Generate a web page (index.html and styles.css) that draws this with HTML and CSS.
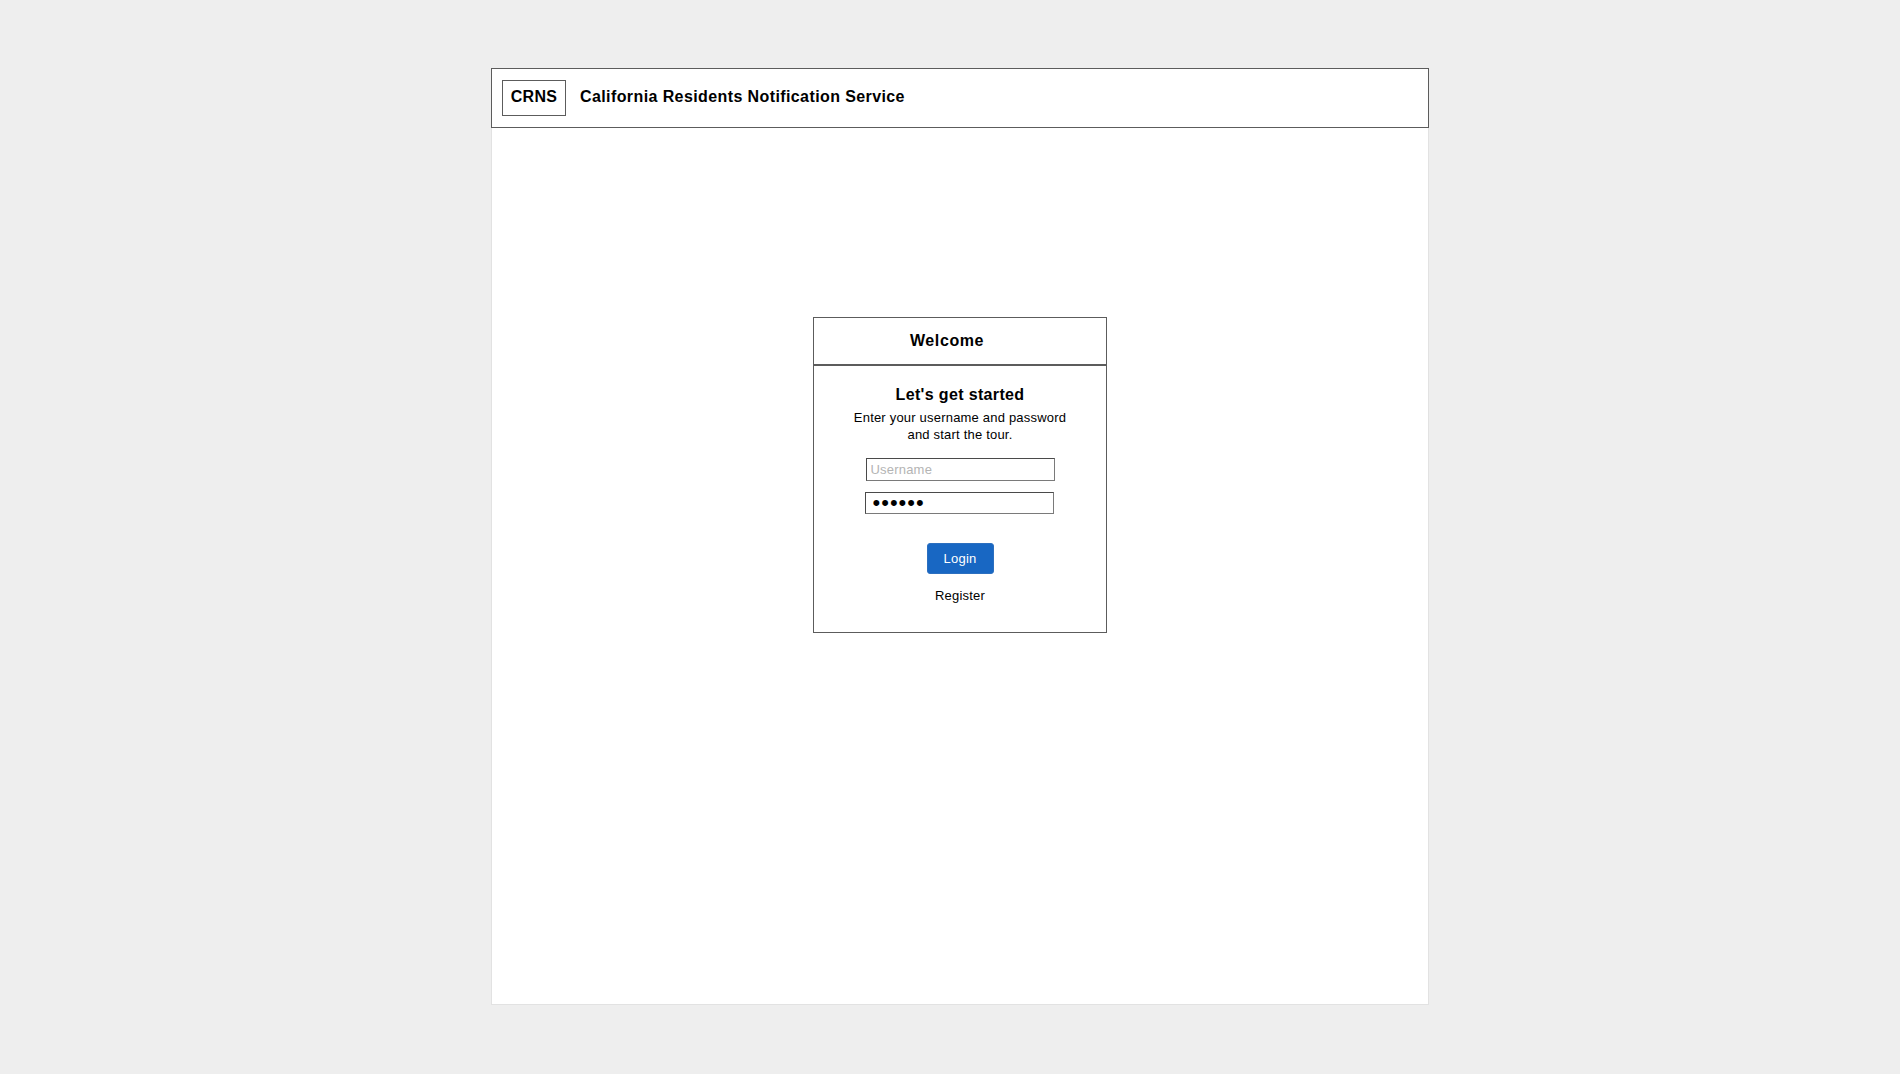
FILE: index.html
```html
<!DOCTYPE html>
<html>
<head>
<meta charset="utf-8">
<link rel="stylesheet" href="styles.css">
</head>
<body>
<div class="page">
  <header class="topbar">
    <div class="logo">CRNS</div>
    <div class="title">California Residents Notification Service</div>
  </header>
  <main class="main">
    <section class="card">
      <div class="card-head">Welcome</div>
      <div class="card-body">
        <div class="heading">Let's get started</div>
        <div class="desc">Enter your username and password<br>and start the tour.</div>
        <input class="field user" type="text" placeholder="Username">
        <input class="field pass" type="password" value="123456">
        <button class="login">Login</button>
        <div class="register">Register</div>
      </div>
    </section>
  </main>
</div>
</body>
</html>
```
FILE: styles.css
```css
html, body {
  margin: 0;
  padding: 0;
}
body {
  background: #eeeeee;
  font-family: "Liberation Sans", Arial, sans-serif;
  color: #000;
  padding: 68px 0 0 491px;
}
.page {
  width: 938px;
}
.topbar {
  box-sizing: border-box;
  height: 60px;
  border: 1px solid #5c5c5c;
  background: #fff;
  display: flex;
  align-items: center;
  padding: 0 10px;
}
.logo {
  box-sizing: border-box;
  width: 64px;
  height: 36px;
  border: 1px solid #5c5c5c;
  display: flex;
  align-items: center;
  justify-content: center;
  font-weight: bold;
  font-size: 16px;
  letter-spacing: 0.3px;
  padding-bottom: 2px;
}
.title {
  margin-left: 14px;
  font-weight: bold;
  font-size: 16px;
  letter-spacing: 0.4px;
  padding-bottom: 3px;
}
.main {
  box-sizing: border-box;
  height: 877px;
  background: #fff;
  border: 1px solid #e2e2e2;
  border-top: none;
  padding-top: 189px;
}
.card {
  box-sizing: border-box;
  width: 294px;
  margin: 0 auto;
  border: 1px solid #5c5c5c;
}
.card-head {
  box-sizing: border-box;
  height: 48px;
  border-bottom: 2px solid #5c5c5c;
  display: flex;
  align-items: center;
  justify-content: center;
  padding-right: 26px;
  padding-bottom: 1px;
  font-weight: bold;
  font-size: 16px;
  letter-spacing: 0.6px;
}
.card-body {
  display: flex;
  flex-direction: column;
  align-items: center;
  padding: 19px 0 28px;
}
.heading {
  font-weight: bold;
  font-size: 16px;
  line-height: 20px;
  letter-spacing: 0.35px;
}
.desc {
  font-size: 13px;
  line-height: 17px;
  text-align: center;
  margin-top: 4px;
  letter-spacing: 0.2px;
}
.field {
  box-sizing: border-box;
  width: 189px;
  height: 23px;
  border: 1px solid #4a4a4a;
  border-right-color: #7a7a7a;
  border-bottom-color: #7a7a7a;
  padding: 0 4px;
  margin: 0;
  font-family: "Liberation Sans", Arial, sans-serif;
  font-size: 13px;
  letter-spacing: 0.2px;
  outline: none;
  background: #fff;
}
.field::placeholder {
  color: #b4b4b4;
}
.user {
  margin-top: 15px;
}
.pass {
  margin-top: 11px;
  margin-right: 2px;
  height: 22px;
  font-size: 22px;
  letter-spacing: 1px;
  padding: 0 0 1px 7px;
}
.login {
  margin-top: 29px;
  width: 67px;
  height: 31px;
  box-sizing: border-box;
  background: #1867c3;
  border: 1px solid #2c6fbf;
  border-radius: 3px;
  color: #fff;
  font-family: "Liberation Sans", Arial, sans-serif;
  font-size: 13px;
  letter-spacing: 0.2px;
  padding: 0;
}
.register {
  margin-top: 14px;
  font-size: 13px;
  line-height: 16px;
  letter-spacing: 0.2px;
}
```
